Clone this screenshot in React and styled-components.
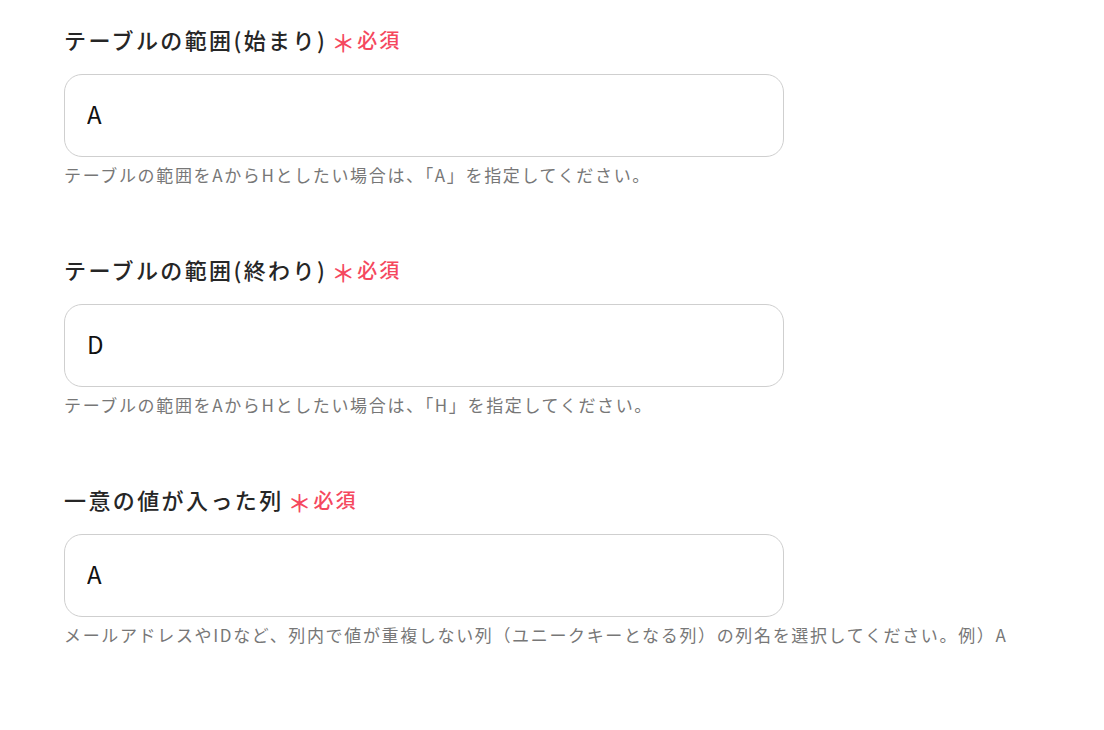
import React from 'react';
import styled, {createGlobalStyle} from 'styled-components';

const GlobalStyle = createGlobalStyle`
  body {
    margin: 0;
    background: #ffffff;
    font-family: "Noto Sans CJK JP", "Noto Sans", sans-serif;
  }
`;

const fields = [
  {
    label: 'テーブルの範囲(始まり)',
    value: 'A',
    help: 'テーブルの範囲をAからHとしたい場合は、「A」を指定してください。',
  },
  {
    label: 'テーブルの範囲(終わり)',
    value: 'D',
    help: 'テーブルの範囲をAからHとしたい場合は、「H」を指定してください。',
  },
  {
    label: '一意の値が入った列',
    value: 'A',
    help: 'メールアドレスやIDなど、列内で値が重複しない列（ユニークキーとなる列）の列名を選択してください。例）A',
  },
];

const App = () => {
  return (
    <Page>
      <GlobalStyle/>
      {fields.map((field) => (
        <Field key={field.label}>
          <Label>
            {field.label}
            <Required>
              <Star>＊</Star>必須
            </Required>
          </Label>
          <Input defaultValue={field.value} readOnly/>
          <Help>{field.help}</Help>
        </Field>
      ))}
    </Page>
  );
};

const Page = styled.div`
    display: flex;
    flex-direction: column;
    gap: 66px;
    padding: 23px 0 0 64px;
`;

const Field = styled.div`
    display: flex;
    flex-direction: column;
`;

const Label = styled.label`
    display: flex;
    align-items: center;
    height: 32px;
    font-size: 22px;
    font-weight: 500;
    color: #262626;
    letter-spacing: 2.4px;
`;

const Required = styled.span`
    display: inline-flex;
    align-items: center;
    margin-left: 4px;
    color: #f5485e;
    font-size: 20px;
    font-weight: 500;
    letter-spacing: 2px;
`;

const Star = styled.span`
    font-size: 24px;
    position: relative;
    top: 2px;
`;

const Input = styled.input`
    box-sizing: border-box;
    margin-top: 19px;
    width: 720px;
    height: 83px;
    padding: 0 22px 5px;
    border: 1px solid #cfcfcf;
    border-radius: 18px;
    font-family: "Noto Sans CJK JP", "Noto Sans", sans-serif;
    font-size: 24px;
    color: #111111;
    outline: none;
`;

const Help = styled.p`
    margin: 6px 0 0;
    line-height: 24px;
    font-size: 17px;
    color: #777777;
    letter-spacing: 1.65px;
`;

export default App;
